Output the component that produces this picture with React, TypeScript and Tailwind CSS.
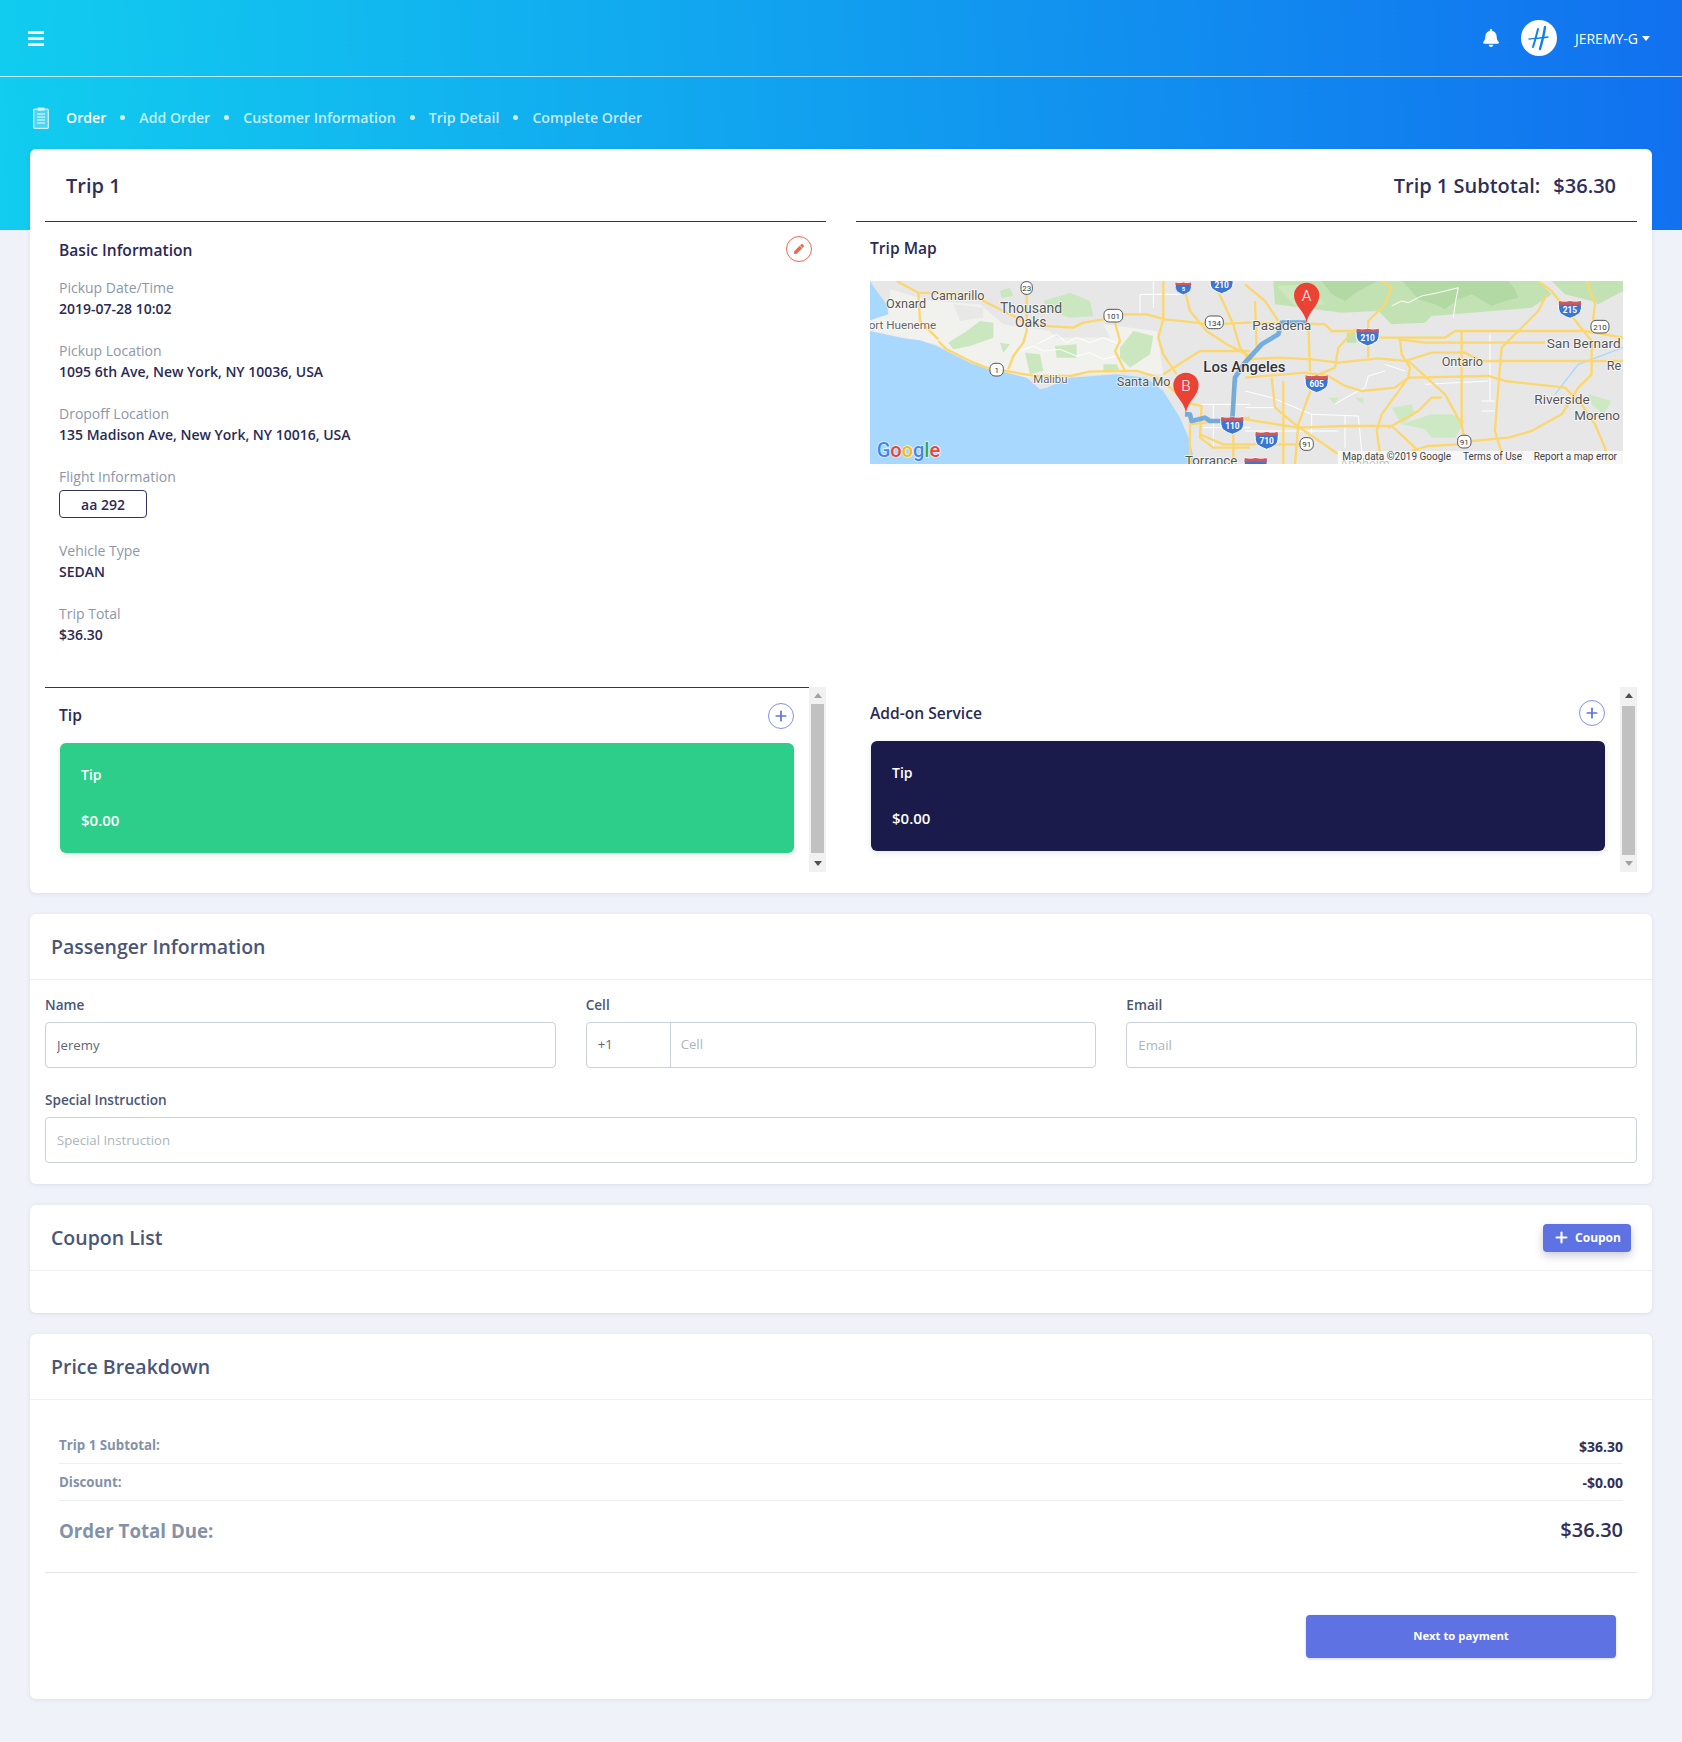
import React from "react";
import { FaBell, FaPen } from "react-icons/fa";
import { Plus } from "lucide-react";

const ROAD = "#fcd76f";

function Shield({ x, y, t, s = 1 }: { x: number; y: number; t: string; s?: number }) {
  return (
    <g transform={`translate(${x},${y}) scale(${s})`}>
      <path d="M-33,-22 Q-16,-17 0,-22 Q16,-17 33,-22 Q38,4 28,16 Q14,26 0,30 Q-14,26 -28,16 Q-38,4 -33,-22Z" fill="#3a76d2" stroke="#fff" strokeWidth="3" />
      <path d="M-33,-22 Q-16,-17 0,-22 Q16,-17 33,-22 L34,-11 L-34,-11Z" fill="#d2565a" />
      <text x="0" y="14" textAnchor="middle" fontSize="25" fontWeight="700" fill="#fff" fontFamily="Roboto, sans-serif">{t}</text>
    </g>
  );
}

function StateSign({ x, y, t, w = 34 }: { x: number; y: number; t: string; w?: number }) {
  return (
    <g transform={`translate(${x},${y})`}>
      <rect x={-w / 2 - 3} y={-20} width={w + 6} height={38} rx={15} fill="#fff" stroke="#555" strokeWidth="3" />
      <text x="0" y="9" textAnchor="middle" fontSize="24" fill="#333" fontFamily="Roboto, sans-serif">{t}</text>
    </g>
  );
}

function Label({ x, y, t, s = 36, c = "#555", w = 400 }: { x: number; y: number; t: string; s?: number; c?: string; w?: number }) {
  return (
    <text x={x} y={y} fontSize={s} fill={c} fontWeight={w} stroke="#fff" strokeWidth="5" paintOrder="stroke" strokeOpacity="0.75" fontFamily="Roboto, sans-serif">{t}</text>
  );
}

function Pin({ x, y, t }: { x: number; y: number; t: string }) {
  return (
    <g transform={`translate(${x},${y})`}>
      <path d="M0,0 C-6,-36 -38,-50 -38,-82 A38,38 0 1 1 38,-82 C38,-50 6,-36 0,0Z" fill="#ea4335" />
      <text x="0" y="-66" textAnchor="middle" fontSize="46" fill="#fff" fontFamily="Roboto, sans-serif" fontWeight="300">{t}</text>
    </g>
  );
}

const poly = (fill: string, pts: string) => <polygon key={pts} points={pts} fill={fill} />;

function MapArt() {
  const leftRoads = [
    "M205,180 L230,205 L300,240 L355,262 L410,270 L465,280 L500,285 L600,285 L660,272 L760,270 L800,270 L850,285 L890,310 L950,365 L995,375 L990,470 L1030,500 L1140,500",
    "M80,0 L145,35 L300,40 L360,70 L400,90 L470,125 L530,135 L610,140 L640,125 L700,115 L760,100 L830,100 L885,115 L950,122 L1020,130 L1140,125",
    "M145,35 L150,120 L205,175",
    "M470,0 L470,150 L460,185 L430,225 L415,265",
    "M880,0 L880,115 L865,170 L880,220 L920,280",
    "M945,30 L960,90 L1010,150 L1070,190 L1140,225",
    "M1090,130 L1110,200 L1140,240",
    "M735,125 L750,180 L735,210 L765,270",
    "M880,280 L990,210 L1140,210",
    "M960,430 L1140,410",
    "M990,460 L1060,490 L1140,490",
    "M960,400 L960,549",
    "M1090,300 L1090,549",
    "M1030,0 L1090,130",
  ];
  const rightRoads = [
    "M0,125 L190,128 L240,130 L260,150 L330,150 L400,170 L600,170 L630,150 L1020,150 L1134,170",
    "M460,175 L540,185 L900,185",
    "M0,235 L100,230 L200,235 L280,245 L400,232 L480,240 L560,215 L660,215 L710,240 L1134,240",
    "M0,290 L180,275 L250,285 L300,315 L350,330 L450,320 L490,290 L730,285 L780,300 L960,320 L1010,370 L1050,430 L1080,500 L1090,549",
    "M190,130 L195,270",
    "M200,320 L160,430 L150,549",
    "M330,145 L280,200 L270,260 L210,285",
    "M905,40 L880,90 L770,200 L760,320 L750,450 L780,549",
    "M880,0 L920,30 L1040,180 L1040,280 L1000,320 L950,400 L860,450 L790,470 L680,480 L640,490 L550,495 L500,510",
    "M465,175 L470,220 L495,260 L490,290 L410,400 L395,450 L410,549",
    "M650,150 L650,440",
    "M490,240 L600,340 L650,430 L660,480",
    "M0,415 L160,440 L300,435 L440,435 L500,490 L520,510",
    "M430,440 L520,390 L560,350 L590,350",
    "M80,290 L90,380 L150,430 L280,520",
    "M0,490 L180,490",
    "M30,60 L35,200",
    "M0,10 L60,60 L100,120",
    "M1025,0 L1050,70 L1040,150",
    "M370,150 L370,230",
    "M410,0 L440,20 L420,70 L370,120 L370,150",
    "M115,300 L115,549",
  ];
  const whites = [
    "M500,190 L530,175 L560,160 L590,185 L620,170 L660,185 L700,170 L750,190",
    "M450,210 L490,195 L520,210 L570,205 L620,225 L660,215 L700,235 L740,225",
    "M850,0 L850,80", "M810,40 L940,40", "M810,40 L810,100", "M985,370 L1140,370", "M1030,370 L1030,500", "M1000,440 L1140,440",
  ];
  const whitesR = [
    "M440,75 L470,60 L490,65 L530,45 L580,35 L640,20 L632,60 L625,110",
    "M360,320 L370,285 L420,270", "M270,370 L320,340 L360,320",
    "M0,330 L80,350 L200,400 L340,405", "M200,400 L200,470", "M300,405 L300,500", "M340,405 L350,510",
    "M710,360 L750,360", "M710,390 L750,390", "M735,160 L735,360", "M540,310 L730,300", "M0,450 L280,450", "M0,380 L90,380", "M420,250 L480,270",
  ];
  return (
    <svg viewBox="0 0 753 183" className="block h-[183px] w-[753px]" preserveAspectRatio="none" aria-label="Trip map">
      <rect width="753" height="183" fill="#e7e7e7" />
      <g transform="translate(375,0) scale(0.3333)">
        {poly("#c3e2b4", "85,0 90,70 290,95 400,90 440,130 540,125 560,105 680,95 860,80 920,40 880,0")}
        {poly("#c3e2b4", "920,0 1134,0 1134,30 1060,70 1040,60 960,40")}
        {poly("#b2d8a4", "230,0 260,40 300,60 340,30 400,0")}
        {poly("#b2d8a4", "470,0 500,30 520,55 570,70 600,85 640,55 680,40 740,75 780,60 820,50 810,25 790,0")}
        {poly("#cde8bf", "95,15 190,10 240,70 150,75")}
        {poly("#cde9c4", "440,380 500,370 510,400 470,430")}
        {poly("#cde9c4", "470,430 560,400 620,400 660,420 630,470 560,470 540,445")}
        {poly("#cde9c4", "250,350 280,350 270,370")}
        {poly("#cde9c4", "330,350 355,350 355,370")}
        {poly("#c3e2b4", "305,155 335,150 335,185 305,185")}
        {poly("#cde9c4", "1030,340 1100,360 1075,400 1040,370")}
        <path d="M930,340 L1000,250 L1134,200" fill="none" stroke="#a9d8fe" strokeWidth="4" />
        {whitesR.map((d) => <path key={d} d={d} fill="none" stroke="#fff" strokeWidth="3" />)}
        {rightRoads.map((d) => <path key={d} d={d} fill="none" stroke={ROAD} strokeWidth="7" strokeLinejoin="round" />)}
      </g>
      <g transform="scale(0.3333)">
        {poly("#f1f1ed", "60,25 180,60 330,70 400,130 540,150 700,130 860,150 880,280 760,275 600,285 470,290 300,245 200,190 0,150 0,115 55,100")}
        {poly("#e8e8e6", "520,130 700,130 720,170 560,170")}
        {poly("#e8e8e6", "250,70 340,80 340,110 270,120")}
        {poly("#cbe7c0", "235,185 290,150 330,120 370,125 370,170 300,195 250,205")}
        {poly("#cbe7c0", "520,60 600,35 660,60 670,105 600,110 540,90")}
        {poly("#cbe7c0", "750,200 790,150 850,165 840,220 780,260 750,230")}
        {poly("#cbe7c0", "465,215 510,220 520,270 480,280")}
        {poly("#cbe7c0", "555,195 620,190 620,230 560,230")}
        {poly("#cbe7c0", "390,185 420,190 400,215")}
        {poly("#cbe7c0", "700,250 740,250 750,270 700,270")}
        {poly("#cbe7c0", "390,30 420,20 430,45 395,50")}
        {poly("#a9d8fe", "0,0 20,30 50,70 55,100 0,118")}
        {poly("#a9d8fe", "0,150 100,172 150,178 200,195 240,215 300,245 355,265 410,275 470,290 510,325 530,320 600,290 740,280 830,290 880,330 930,410 960,480 975,549 0,549")}
        {whites.map((d) => <path key={d} d={d} fill="none" stroke="#fff" strokeWidth="3" />)}
        {leftRoads.map((d) => <path key={d} d={d} fill="none" stroke={ROAD} strokeWidth="7" strokeLinejoin="round" />)}
        <path d="M1310,125 L1235,125 L1225,160 L1175,190 L1125,245 L1095,290 L1088,400 L1085,420 L1020,420 L1005,410 L965,420 L960,400 L945,400" fill="none" stroke="#5fa2dd" strokeOpacity="0.85" strokeWidth="14" strokeLinejoin="round" />
        <Label x={48} y={80} t="Oxnard" s={38} />
        <Label x={182} y={56} t="Camarillo" s={38} />
        <Label x={390} y={95} t="Thousand" s={42} />
        <Label x={435} y={137} t="Oaks" s={42} />
        <Label x={-4} y={144} t="ort Hueneme" s={35} c="#666" />
        <Label x={490} y={306} t="Malibu" s={34} c="#666" />
        <Label x={740} y={316} t="Santa Mo" s={38} />
        <Label x={1000} y={273} t="Los Angeles" s={45} c="#333" w={500} />
        <Label x={945} y={552} t="Torrance" s={40} />
        <text x="20" y="527" fontSize="60" fontWeight="500" fontFamily="Roboto, sans-serif" stroke="#fff" strokeWidth="5" strokeOpacity="0.7" paintOrder="stroke">
          <tspan fill="#4285f4">G</tspan>
          <tspan fill="#ea4335">o</tspan>
          <tspan fill="#fbbc05">o</tspan>
          <tspan fill="#4285f4">g</tspan>
          <tspan fill="#34a853">l</tspan>
          <tspan fill="#ea4335">e</tspan>
        </text>
        <Shield x={940} y={20} t="5" s={0.7} />
        <Shield x={1055} y={8} t="210" />
        <Shield x={1087} y={430} t="110" />
        <StateSign x={470} y={22} t="23" w={28} />
        <StateSign x={730} y={105} t="101" w={50} />
        <StateSign x={1033} y={125} t="134" w={48} />
        <StateSign x={380} y={267} t="1" w={34} />
        <Pin x={948} y={395} t="B" />
      </g>
      <g transform="translate(375,0) scale(0.3333)">
        <Label x={22} y={146} t="Pasadena" s={40} />
        <Label x={590} y={256} t="Ontario" s={38} />
        <Label x={905} y={200} t="San Bernard" s={41} />
        <Label x={1085} y={268} t="Re" s={38} />
        <Label x={868} y={368} t="Riverside" s={41} />
        <Label x={988} y={418} t="Moreno" s={40} />
        <Label x={285} y={560} t="Anaheim" s={38} />
        <Shield x={368} y={165} t="210" />
        <Shield x={975} y={82} t="215" />
        <Shield x={215} y={305} t="605" />
        <Shield x={65} y={475} t="710" />
        <Shield x={32} y={553} t="" />
        <StateSign x={1065} y={138} t="210" w={48} />
        <StateSign x={185} y={490} t="91" w={34} />
        <StateSign x={658} y={483} t="91" w={34} />
        <Pin x={185} y={125} t="A" />
        <rect x="278" y="510" width="856" height="39" fill="#fff" fillOpacity="0.65" />
        <text x="292" y="537" fontSize="30" fill="#444" fontFamily="Roboto, sans-serif">Map data ©2019 Google</text>
        <text x="654" y="537" fontSize="30" fill="#444" fontFamily="Roboto, sans-serif">Terms of Use</text>
        <text x="866" y="537" fontSize="30" fill="#444" fontFamily="Roboto, sans-serif">Report a map error</text>
      </g>
    </svg>
  );
}

function Triangle({ dir, dark }: { dir: "up" | "down"; dark: boolean }) {
  return (
    <div className="flex h-[17px] items-center justify-center">
      <div
        className={`h-0 w-0 border-x-[4px] border-x-transparent ${
          dir === "up"
            ? dark ? "border-b-[5px] border-b-[#505050]" : "border-b-[5px] border-b-[#a3a3a3]"
            : dark ? "border-t-[5px] border-t-[#505050]" : "border-t-[5px] border-t-[#a3a3a3]"
        }`}
      />
    </div>
  );
}

function Scrollbar({ right }: { right?: boolean }) {
  return (
    <div className="flex h-[185px] w-[17px] shrink-0 flex-col bg-[#f1f1f1]">
      <Triangle dir="up" dark={!!right} />
      <div className={`mx-[2px] h-[149px] bg-[#c1c1c1] ${right ? "mt-[2px]" : ""}`} />
      <div className="flex-1" />
      <Triangle dir="down" dark={!right} />
    </div>
  );
}

function Info({ label, value }: { label: string; value: string }) {
  return (
    <div className="mb-[21px] text-[14px] leading-[21px]">
      <div className="font-medium text-[#8d97a8]">{label}</div>
      <div className="font-semibold text-[#2a2a55]">{value}</div>
    </div>
  );
}

function AddButton() {
  return (
    <button className="flex h-[26px] w-[26px] items-center justify-center rounded-full border border-[#7f90ea] text-[#5e72e4]">
      <Plus size={16} strokeWidth={2.6} />
    </button>
  );
}

function Card({ title, color, cls }: { title: string; color: string; cls: string }) {
  return (
    <div className={`flex h-[110px] w-[734px] flex-col rounded-[6px] px-[21px] pt-[21px] text-white shadow-[0_2px_6px_rgba(0,0,0,0.1)] ${color} ${cls}`}>
      <div className="text-[14px] font-semibold leading-[21px]">{title}</div>
      <div className="mt-[25px] text-[15px] font-semibold leading-[21px]">$0.00</div>
    </div>
  );
}

function SectionHeader({ title, children }: { title: string; children?: React.ReactNode }) {
  return (
    <div className="flex h-[66px] items-center justify-between border-b border-[#eeeff3] px-[21px]">
      <h2 className="text-[19.5px] font-semibold text-[#4a5678]">{title}</h2>
      {children}
    </div>
  );
}

const fieldLabel = "mb-[7px] block text-[13.6px] font-semibold leading-[21px] text-[#4a5678]";
const fieldInput = "h-[46px] w-full rounded-[4px] border border-[#cad1d7] bg-white px-[11px] text-[13.2px] text-[#5b6779] outline-none placeholder:text-[#adb5bd]";

export default function App() {
  const crumbs = ["Add Order", "Customer Information", "Trip Detail", "Complete Order"];
  return (
    <div className="min-h-[1742px] bg-[#eff2f9] font-['Open_Sans',sans-serif] text-[#32325d]">
      <header className="h-[230px] bg-[linear-gradient(87deg,#11cdef_0,#1171ef_100%)] text-white">
        <div className="flex h-[77px] items-center justify-between border-b border-[#ffffffb0] pl-[28px] pr-[32px]">
          <div className="flex w-[16px] flex-col gap-[3px]">
            <span className="h-[3px] bg-white" />
            <span className="h-[3px] bg-white" />
            <span className="h-[3px] bg-white" />
          </div>
          <div className="flex items-center">
            <FaBell size={18} className="mr-[21px]" />
            <div className="mr-[18px] flex h-[36px] w-[36px] items-center justify-center rounded-full bg-white">
              <svg viewBox="0 0 36 36" className="h-[36px] w-[36px]">
                <path d="M17,9 C15.5,15 14,21 12,27" fill="none" stroke="#1180ee" strokeWidth="2" strokeLinecap="round" />
                <path d="M24,7 C23,15 21,22 19,29" fill="none" stroke="#1180ee" strokeWidth="2.4" strokeLinecap="round" />
                <path d="M8,19 C13,18.5 20,18 27,17" fill="none" stroke="#1180ee" strokeWidth="1.3" strokeLinecap="round" />
              </svg>
            </div>
            <span className="text-[14px]">JEREMY-G</span>
            <span className="ml-[4px] h-0 w-0 border-x-[4px] border-t-[5px] border-x-transparent border-t-white" />
          </div>
        </div>
        <nav className="flex h-[72px] items-center pl-[33px] pt-[9px] text-[14.15px] font-semibold">
          <svg viewBox="0 0 16 22" className="mr-[17px] h-[22px] w-[16px]" fill="none">
            <rect x="0.7" y="2.2" width="14.6" height="19.1" rx="1" stroke="#cfeffb" strokeWidth="1.3" fill="#7fdcf6" fillOpacity="0.55" />
            <rect x="4.5" y="0.6" width="7" height="3" fill="#dff6fd" />
            <path d="M4,7H12M4,10H12M4,13H12M4,16H12" stroke="#f0fbff" strokeWidth="1.1" />
          </svg>
          <span className="text-white">Order</span>
          {crumbs.map((c) => (
            <React.Fragment key={c}>
              <span className="mx-[14px] h-[5px] w-[5px] rounded-full bg-[#ffffffc8]" />
              <span className="text-[#ffffffc0]">{c}</span>
            </React.Fragment>
          ))}
        </nav>
      </header>

      <main className="-mt-[81px] flex flex-col gap-[21px] px-[30px] pb-[42px]">
        <section className="rounded-[6px] bg-white px-[15px] pb-[21px] shadow-[0_1px_4px_rgba(50,50,93,0.1)]">
          <div className="flex h-[72px] items-center justify-between pl-[21px] pr-[21px] pt-[2px] text-[20px] font-semibold text-[#2f2f5a]">
            <h1>Trip 1</h1>
            <div>Trip 1 Subtotal:<span className="ml-[13px]">$36.30</span></div>
          </div>
          <div className="grid grid-cols-2 gap-x-[30px]">
            <div className="border-t border-[#32325d] pb-[21px] pl-[14px] pr-[14px] pt-[13px]">
              <div className="mb-[14px] flex h-[28px] items-center justify-between">
                <h3 className="pt-[4px] text-[15.6px] font-semibold text-[#2a2a55]">Basic Information</h3>
                <button className="flex h-[26px] w-[26px] items-center justify-center rounded-full border border-[#f5634f] text-[#f5634f]">
                  <FaPen size={10} />
                </button>
              </div>
              <Info label="Pickup Date/Time" value="2019-07-28 10:02" />
              <Info label="Pickup Location" value="1095 6th Ave, New York, NY 10036, USA" />
              <Info label="Dropoff Location" value="135 Madison Ave, New York, NY 10016, USA" />
              <div className="mb-[22px] text-[14px] leading-[21px]">
                <div className="mb-[3px] font-medium text-[#8d97a8]">Flight Information</div>
                <div className="flex h-[28px] w-[88px] items-center justify-center rounded-[4px] border border-[#32325d] font-semibold text-[#2a2a55]">aa 292</div>
              </div>
              <Info label="Vehicle Type" value="SEDAN" />
              <Info label="Trip Total" value="$36.30" />
            </div>
            <div className="border-t border-[#32325d] px-[14px] pt-[13px]">
              <h3 className="mb-[18px] flex h-[28px] items-center text-[15.6px] font-semibold text-[#2a2a55]">Trip Map</h3>
              <MapArt />
            </div>
            <div className="flex">
              <div className="flex-1 border-t border-[#32325d] pl-[15px] pr-[15px]">
                <div className="-ml-[1px] mt-[14px] flex h-[28px] items-center justify-between">
                  <h3 className="text-[15.6px] font-semibold text-[#2a2a55]">Tip</h3>
                  <AddButton />
                </div>
                <Card title="Tip" color="bg-[#2dce89]" cls="mt-[13px]" />
              </div>
              <Scrollbar />
            </div>
            <div className="flex">
              <div className="flex-1 pl-[15px] pr-[15px]">
                <div className="-ml-[1px] mt-[12px] flex h-[28px] items-center justify-between">
                  <h3 className="pt-[2px] text-[15.6px] font-semibold text-[#2a2a55]">Add-on Service</h3>
                  <AddButton />
                </div>
                <Card title="Tip" color="bg-[#1a1b4b]" cls="mt-[14px]" />
              </div>
              <Scrollbar right />
            </div>
          </div>
        </section>

        <section className="h-[270px] rounded-[6px] bg-white shadow-[0_1px_4px_rgba(50,50,93,0.1)]">
          <SectionHeader title="Passenger Information" />
          <div className="px-[15px] pt-[14px]">
            <div className="grid grid-cols-3 gap-x-[30px]">
              <div>
                <label className={fieldLabel}>Name</label>
                <input className={fieldInput} defaultValue="Jeremy" />
              </div>
              <div>
                <label className={fieldLabel}>Cell</label>
                <div className="flex h-[46px] overflow-hidden rounded-[4px] border border-[#cad1d7] text-[13.2px]">
                  <div className="flex w-[84px] items-center border-r border-[#cad1d7] px-[11px] text-[#5b6779]">+1</div>
                  <input className="min-w-0 flex-1 px-[10px] outline-none placeholder:text-[#adb5bd]" placeholder="Cell" />
                </div>
              </div>
              <div>
                <label className={fieldLabel}>Email</label>
                <input className={fieldInput} placeholder="Email" />
              </div>
            </div>
            <div className="mt-[21px]">
              <label className={fieldLabel}>Special Instruction</label>
              <input className={fieldInput} placeholder="Special Instruction" />
            </div>
          </div>
        </section>

        <section className="h-[108px] rounded-[6px] bg-white shadow-[0_1px_4px_rgba(50,50,93,0.1)]">
          <SectionHeader title="Coupon List">
            <button className="flex h-[28px] w-[88px] items-center justify-center gap-[5px] rounded-[4px] bg-[#5e72e4] text-[12px] font-bold text-white shadow-[0_4px_8px_rgba(50,50,93,0.25)]">
              <Plus size={17} strokeWidth={3} />
              Coupon
            </button>
          </SectionHeader>
        </section>

        <section className="h-[365px] rounded-[6px] bg-white shadow-[0_1px_4px_rgba(50,50,93,0.1)]">
          <SectionHeader title="Price Breakdown" />
          <div className="mx-[15px] border-b border-[#e3e4ea] px-[14px] pb-[26px] pt-[29px]">
            <div className="flex h-[35px] items-center justify-between border-b border-[#eeeff3] font-bold">
              <span className="text-[13.3px] text-[#8392a8]">Trip 1 Subtotal:</span>
              <span className="text-[14px] text-[#2f2f5a]">$36.30</span>
            </div>
            <div className="flex h-[37px] items-center justify-between border-b border-[#eeeff3] pt-[1px] font-bold">
              <span className="text-[13.3px] text-[#8392a8]">Discount:</span>
              <span className="text-[14px] text-[#2f2f5a]">-$0.00</span>
            </div>
            <div className="flex h-[45px] items-end justify-between pb-[1px] font-bold">
              <span className="text-[18.7px] text-[#8392a8]">Order Total Due:</span>
              <span className="text-[20px] font-semibold text-[#2f2f5a]">$36.30</span>
            </div>
          </div>
          <div className="flex justify-end pr-[36px] pt-[42px]">
            <button className="h-[43px] w-[310px] rounded-[4px] bg-[#5e72e4] text-[11.3px] font-bold text-white shadow-[0_1px_3px_rgba(50,50,93,0.2)]">
              Next to payment
            </button>
          </div>
        </section>
      </main>
    </div>
  );
}
